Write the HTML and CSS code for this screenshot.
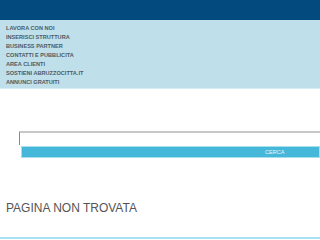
FILE: index.html
```html
<!DOCTYPE html>
<html>
<head>
<meta charset="utf-8">
<link rel="stylesheet" href="styles.css">
</head>
<body>
<div class="top"></div>
<nav class="menu">
  <a>LAVORA CON NOI</a>
  <a>INSERISCI STRUTTURA</a>
  <a>BUSINESS PARTNER</a>
  <a>CONTATTI E PUBBLICITA</a>
  <a>AREA CLIENTI</a>
  <a>SOSTIENI ABRUZZOCITTA.IT</a>
  <a>ANNUNCI GRATUITI</a>
</nav>
<form class="search">
  <input class="field" type="text">
  <button class="btn" type="button">CERCA</button>
</form>
<h1 class="title">PAGINA NON TROVATA</h1>
<div class="rule"></div>
</body>
</html>
```
FILE: styles.css
```css
html, body { margin: 0; padding: 0; }
body { width: 320px; height: 240px; overflow: hidden; background: #fff; font-family: "Liberation Sans", Arial, sans-serif; }
.top { height: 20px; background: #034a7e; }
.menu { height: 64px; background: #bfe0ea; border-bottom: 1px solid #d8edf3; display: flex; flex-direction: column; padding: 4px 0 0 6px; box-sizing: content-box; }
.menu a { font-size: 5.6px; font-weight: bold; color: #4d5a64; line-height: 9px; height: 9px; }
.search { margin: 42px 0 0 19px; display: flex; flex-direction: column; }
.field { height: 14px; box-sizing: border-box; width: 301px; margin: 0; padding: 0; border: 0; border-top: 2px solid #c8c8c8; border-left: 1px solid #8a8a8a; background: #fff; }
.btn { margin: 1px 0 0 2px; height: 12px; width: 299px; box-sizing: border-box; border: 1px solid #a6dff0; background: #45b8da; color: #e6f6fb; font-family: "Liberation Sans", Arial, sans-serif; font-size: 5.6px; text-align: left; padding: 0 0 0 243px; line-height: 10px; }
.title { margin: 43px 0 0 6px; font-size: 12px; font-weight: normal; color: #555; line-height: 14px; }
.rule { margin-top: 22px; height: 2px; background: #a8e2f0; }
```
